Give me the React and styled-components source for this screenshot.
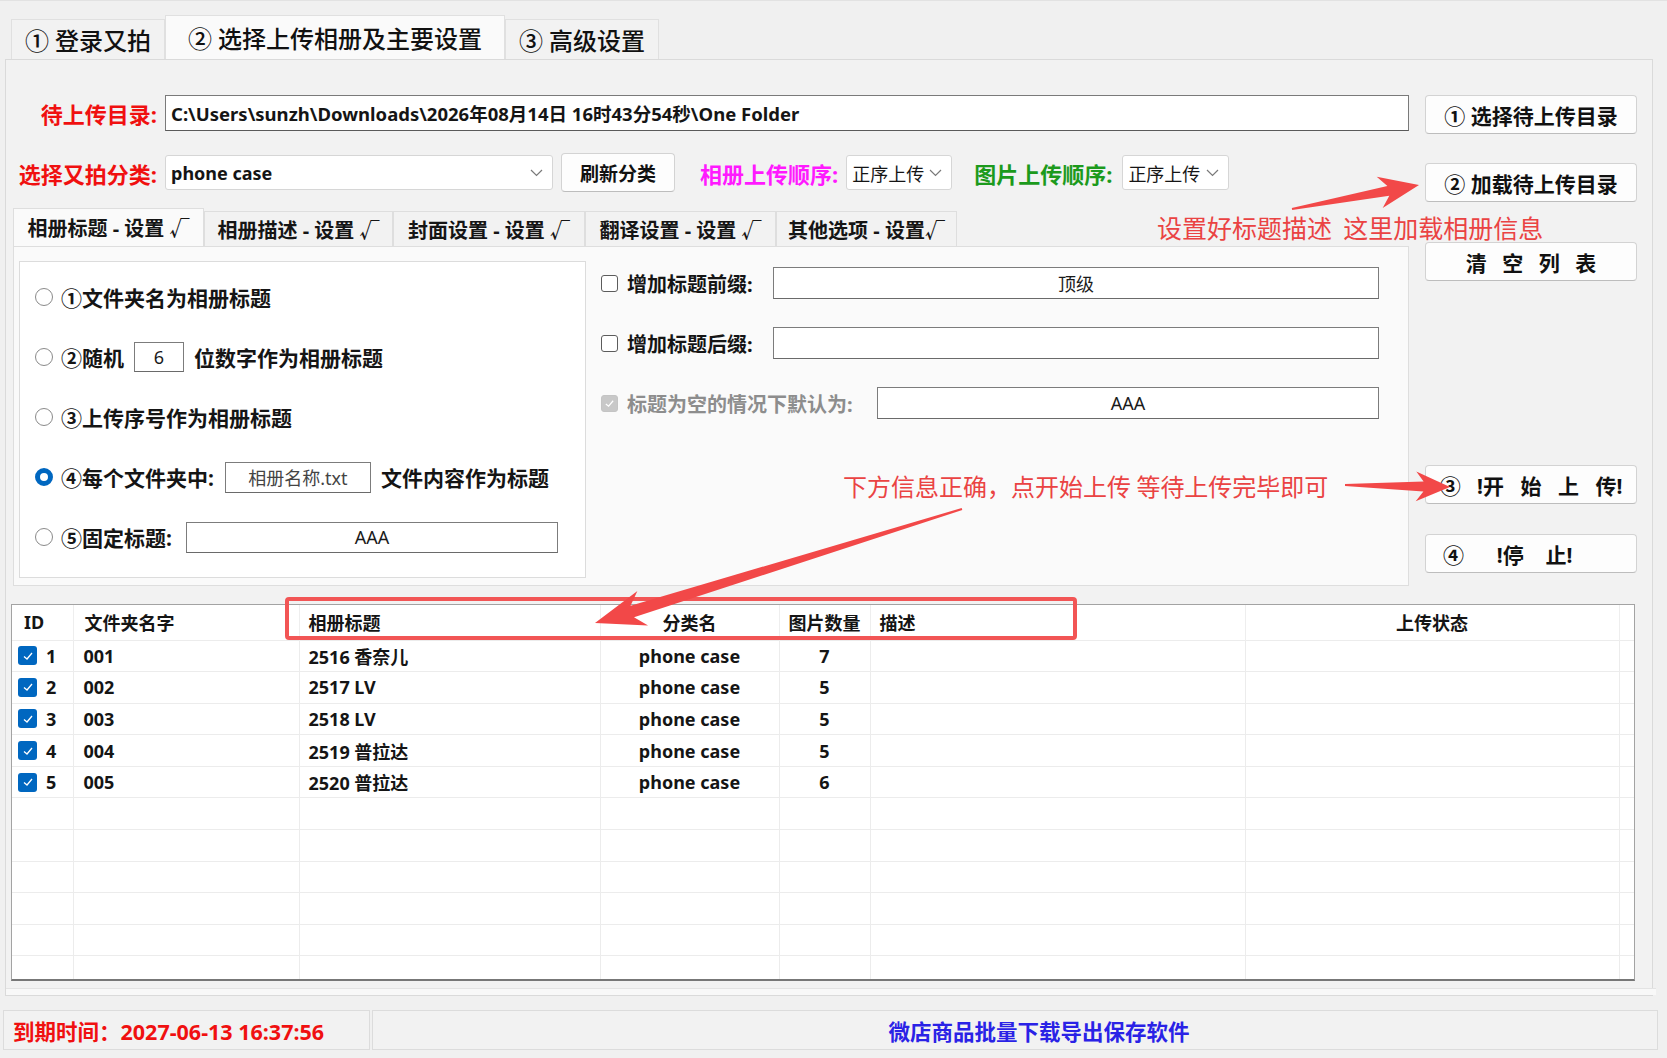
import styled, { createGlobalStyle } from "styled-components";

const GlobalStyle = createGlobalStyle`
  html, body {
    margin: 0;
    padding: 0;
    background: #f0f0f0;
  }
  body {
    font-family: "Noto Sans", "Noto Sans CJK SC", sans-serif;
    color: #151515;
  }
  * { box-sizing: border-box; }
`

const Window = styled.div`
    position: relative;
    width: 1667px;
    height: 1058px;
    overflow: hidden;
    background: #f0f0f0;
    padding-top: 14px;
    border-top: 1px solid #e2e2e2;
`

const TopTabs = styled.div`
    display: flex;
    align-items: flex-end;
    height: 44px;
    padding-left: 11px;
`

const TopTab = styled.div`
    width: ${p => p.$w}px;
    height: ${p => p.$active ? 44 : 40}px;
    display: flex;
    align-items: center;
    justify-content: center;
    font-size: 24px;
    font-weight: 500;
    background: ${p => p.$active ? '#fafafa' : '#f2f2f2'};
    border: 1px solid #e0e0e0;
    border-bottom: none;
    color: #111;
`

const MainPage = styled.div`
    margin: 0 14px 0 5px;
    height: 937px;
    background: #f2f2f2;
    border: 1px solid #dadada;
    padding: 35px 15px 0 7px;
`

const TopSection = styled.div`
    display: flex;
`

const LeftCol = styled.div`
    width: 1396px;
`

const RightCol = styled.div`
    width: 212px;
    margin-left: 16px;
    display: flex;
    flex-direction: column;
`

const FormRow = styled.div`
    display: flex;
    align-items: center;
    height: ${p => p.$h}px;
    margin-top: ${p => p.$mt || 0}px;
`

const Label = styled.div`
    width: ${p => p.$w ? `${p.$w}px` : 'auto'};
    margin-left: ${p => p.$ml || 0}px;
    text-align: right;
    padding-right: ${p => p.$pr || 0}px;
    font-size: 22px;
    font-weight: 700;
    color: ${p => p.$color};
    white-space: nowrap;
`

const PathInput = styled.div`
    flex: 1;
    height: 36px;
    background: #fff;
    border: 1px solid #7a7a7a;
    border-bottom-color: #5a5a5a;
    display: flex;
    align-items: center;
    padding-left: 5px;
    font-size: 18.5px;
    font-weight: 700;
    white-space: nowrap;
`

const Select = styled.div`
    width: ${p => p.$w}px;
    height: 35px;
    margin-left: ${p => p.$ml || 0}px;
    background: #fff;
    border: 1px solid #d6d6d6;
    border-radius: 3px;
    display: flex;
    align-items: center;
    justify-content: space-between;
    padding: 0 9px 0 5px;
    font-size: 18px;
    font-weight: ${p => p.$bold ? 700 : 400};
    white-space: nowrap;
`

const Button = styled.div`
    width: ${p => p.$w}px;
    height: 39px;
    margin-left: ${p => p.$ml || 0}px;
    margin-top: ${p => p.$mt || 0}px;
    background: #fdfdfd;
    border: 1px solid #d3d3d3;
    border-bottom-color: #bdbdbd;
    border-radius: 4px;
    display: flex;
    align-items: center;
    justify-content: ${p => p.$left ? 'flex-start' : 'center'};
    padding-left: ${p => p.$left ? 17 : 0}px;
    font-size: ${p => p.$fs || 21}px;
    font-weight: 700;
    white-space: pre;
    word-spacing: ${p => p.$ws || 0}px;
    color: #111;
`

const SubTabs = styled.div`
    display: flex;
    align-items: flex-end;
    height: 38px;
    margin-top: 16px;
`

const SubTab = styled.div`
    width: ${p => p.$w}px;
    height: ${p => p.$active ? 38 : 35}px;
    display: flex;
    align-items: center;
    justify-content: center;
    font-size: 20px;
    font-weight: 700;
    background: ${p => p.$active ? '#fafafa' : '#f2f2f2'};
    border: 1px solid #dedede;
    border-bottom: none;
    white-space: pre;
`

const SubPage = styled.div`
    height: 340px;
    background: #fafafa;
    border: 1px solid #dedede;
    padding: 14px 0 0 5px;
    display: flex;
`

const GroupBox = styled.div`
    width: 567px;
    height: 317px;
    background: #fff;
    border: 1px solid #dcdcdc;
    padding: 5px 0 0 15px;
`

const RadioRow = styled.div`
    display: flex;
    align-items: center;
    height: 60px;
    gap: ${p => p.$gap || 8}px;
    font-size: 21px;
    font-weight: 700;
    white-space: nowrap;
`

const Radio = styled.span`
    width: 18px;
    height: 18px;
    border-radius: 50%;
    flex: none;
    background: #fff;
    border: ${p => p.$on ? '5px solid #0067c0' : '1px solid #8a8a8a'};
`

const TextBox = styled.div`
    width: ${p => p.$w}px;
    height: ${p => p.$h || 31}px;
    margin-left: ${p => p.$ml || 0}px;
    margin-right: ${p => p.$mr || 0}px;
    background: #fff;
    border: 1px solid #7c7c7c;
    border-bottom-color: #6a6a6a;
    display: flex;
    align-items: center;
    justify-content: center;
    font-size: 18px;
    font-weight: 400;
    color: ${p => p.$muted ? '#444' : '#1a1a1a'};
    flex: none;
`

const Options = styled.div`
    margin-left: 15px;
    padding-top: 6px;
    display: flex;
    flex-direction: column;
    gap: 28px;
`

const OptRow = styled.div`
    display: flex;
    align-items: center;
    height: 32px;
`

const CheckBox = styled.span`
    width: 17px;
    height: 17px;
    flex: none;
    border-radius: 3px;
    border: 1px solid ${p => p.$disabled ? '#c4c4c4' : '#5c5c5c'};
    background: ${p => p.$disabled ? '#c8c8c8' : '#fff'};
    display: flex;
    align-items: center;
    justify-content: center;
`

const OptLabel = styled.div`
    width: ${p => p.$w}px;
    margin-left: 9px;
    font-size: 20px;
    font-weight: 700;
    color: ${p => p.$muted ? '#8d8d8d' : '#151515'};
    white-space: nowrap;
`

const TableWrap = styled.div`
    width: 1624px;
    height: 377px;
    margin: 18px 0 0 -2px;
    background: #fff;
    border: 1px solid #a3a3a3;
    border-bottom: 2px solid #777;
    overflow: hidden;
`

const Table = styled.table`
    table-layout: fixed;
    border-collapse: collapse;
    width: 1622px;
`

const Th = styled.th`
    height: 35px;
    padding: 0 0 0 ${p => p.$pl || 0}px;
    text-align: ${p => p.$align || 'left'};
    font-size: 18px;
    font-weight: 700;
    border-right: 1px solid #eeeeee;
    white-space: nowrap;
`

const Td = styled.td`
    height: 31.6px;
    padding: 0 0 0 ${p => p.$pl || 0}px;
    text-align: ${p => p.$align || 'left'};
    font-size: 18px;
    font-weight: 700;
    border-right: 1px solid #ececec;
    border-top: 1px solid #ececec;
    white-space: nowrap;
`

const IdCell = styled.div`
    display: flex;
    align-items: center;
    gap: 9px;
`

const RowCheck = styled.span`
    width: 19px;
    height: 19px;
    border-radius: 3px;
    background: #0067c0;
    display: flex;
    align-items: center;
    justify-content: center;
`

const BottomStrip = styled.div`
    height: 7px;
    margin: 7px 0 0 -7px;
    width: 1650px;
    background: #f8f8f8;
    border-top: 1px solid #e3e3e3;
`

const StatusBar = styled.div`
    display: flex;
    height: 40px;
    margin: 14px 9px 0 3px;
`

const StatusCell = styled.div`
    width: ${p => p.$w ? `${p.$w}px` : 'auto'};
    flex: ${p => p.$w ? 'none' : 1};
    margin-left: ${p => p.$ml || 0}px;
    border: 1px solid #dcdcdc;
    background: #f2f2f2;
    display: flex;
    align-items: center;
    justify-content: ${p => p.$center ? 'center' : 'flex-start'};
    padding-left: ${p => p.$pl || 0}px;
    font-size: 21.5px;
    font-weight: 700;
    color: ${p => p.$color};
    white-space: nowrap;
`

const Note = styled.div`
    position: absolute;
    left: ${p => p.$x}px;
    top: ${p => p.$y}px;
    font-size: ${p => p.$fs}px;
    line-height: 34px;
    color: #ea4343;
    white-space: pre;
    font-family: "Noto Sans CJK SC", sans-serif;
`

const Highlight = styled.div`
    position: absolute;
    left: 285px;
    top: 596px;
    width: 792px;
    height: 43px;
    border: 4px solid #f25555;
    border-radius: 4px;
`

const Overlay = styled.svg`
    position: absolute;
    left: 0;
    top: 0;
    pointer-events: none;
`

function Chevron() {
    return (
        <svg width="13" height="8" viewBox="0 0 13 8">
            <polyline points="1,1 6.5,6.5 12,1" fill="none" stroke="#7a7a7a" strokeWidth="1.2" />
        </svg>
    )
}

function Tick({ color = '#fff', size = 12 }) {
    return (
        <svg width={size} height={size} viewBox="0 0 12 12">
            <polyline points="2,6.5 5,9 10,3" fill="none" stroke={color} strokeWidth="1.3" />
        </svg>
    )
}

function arrow(x1, y1, x2, y2, headLen, headW, tailW, neckW) {
    const len = Math.hypot(x2 - x1, y2 - y1)
    const ux = (x2 - x1) / len
    const uy = (y2 - y1) / len
    const nx = -uy
    const ny = ux
    const pt = (x, y) => `${x.toFixed(1)},${y.toFixed(1)}`
    const bx = x2 - ux * headLen
    const by = y2 - uy * headLen
    const kx = x2 - ux * headLen * 0.78
    const ky = y2 - uy * headLen * 0.78
    return [
        pt(x1 + nx * tailW / 2, y1 + ny * tailW / 2),
        pt(kx + nx * neckW / 2, ky + ny * neckW / 2),
        pt(bx + nx * headW / 2, by + ny * headW / 2),
        pt(x2, y2),
        pt(bx - nx * headW / 2, by - ny * headW / 2),
        pt(kx - nx * neckW / 2, ky - ny * neckW / 2),
        pt(x1 - nx * tailW / 2, y1 - ny * tailW / 2),
    ].join(' ')
}

const topTabs = [
    { label: '① 登录又拍', w: 154 },
    { label: '② 选择上传相册及主要设置', w: 340, active: true },
    { label: '③ 高级设置', w: 154 },
]

const subTabs = [
    { label: '相册标题 - 设置 √', w: 191, active: true },
    { label: '相册描述 - 设置 √', w: 189 },
    { label: '封面设置 - 设置 √', w: 192 },
    { label: '翻译设置 - 设置 √', w: 191 },
    { label: '其他选项 - 设置√', w: 181 },
]

const columns = [
    { label: 'ID', w: 61, pl: 12 },
    { label: '文件夹名字', w: 226, pl: 11 },
    { label: '相册标题', w: 301, pl: 9 },
    { label: '分类名', w: 179, align: 'center' },
    { label: '图片数量', w: 91, align: 'center' },
    { label: '描述', w: 375, pl: 9 },
    { label: '上传状态', w: 374, align: 'center' },
    { label: '', w: 17 },
]

const albums = [
    { id: 1, folder: '001', title: '2516 香奈儿', cat: 'phone case', count: 7 },
    { id: 2, folder: '002', title: '2517 LV', cat: 'phone case', count: 5 },
    { id: 3, folder: '003', title: '2518 LV', cat: 'phone case', count: 5 },
    { id: 4, folder: '004', title: '2519 普拉达', cat: 'phone case', count: 5 },
    { id: 5, folder: '005', title: '2520 普拉达', cat: 'phone case', count: 6 },
]

export default function App() {
    const emptyRows = Array.from({ length: 6 })

    return (
        <Window>
            <GlobalStyle />
            <TopTabs>
                {topTabs.map(t => (
                    <TopTab key={t.label} $w={t.w} $active={t.active}>{t.label}</TopTab>
                ))}
            </TopTabs>

            <MainPage>
                <TopSection>
                    <LeftCol>
                        <FormRow $h={36}>
                            <Label $w={152} $pr={8} $color="#f01010">待上传目录:</Label>
                            <PathInput>C:\Users\sunzh\Downloads\2026年08月14日 16时43分54秒\One Folder</PathInput>
                        </FormRow>

                        <FormRow $h={39} $mt={22}>
                            <Label $w={152} $pr={8} $color="#f01010">选择又拍分类:</Label>
                            <Select $w={388} $bold>phone case<Chevron /></Select>
                            <Button $w={114} $ml={8} $fs={19}>刷新分类</Button>
                            <Label $ml={25} $color="#ff19ff">相册上传顺序:</Label>
                            <Select $w={106} $ml={8}>正序上传<Chevron /></Select>
                            <Label $ml={22} $color="#1c9a1c">图片上传顺序:</Label>
                            <Select $w={107} $ml={10}>正序上传<Chevron /></Select>
                        </FormRow>

                        <SubTabs>
                            {subTabs.map(t => (
                                <SubTab key={t.label} $w={t.w} $active={t.active}>{t.label}</SubTab>
                            ))}
                        </SubTabs>

                        <SubPage>
                            <GroupBox>
                                <RadioRow><Radio />①文件夹名为相册标题</RadioRow>
                                <RadioRow $gap={8}>
                                    <Radio />②随机
                                    <TextBox $w={50} $h={30} $ml={2} $mr={2}>6</TextBox>
                                    位数字作为相册标题
                                </RadioRow>
                                <RadioRow><Radio />③上传序号作为相册标题</RadioRow>
                                <RadioRow>
                                    <Radio $on />④每个文件夹中:
                                    <TextBox $w={146} $ml={3} $mr={2} $muted>相册名称.txt</TextBox>
                                    文件内容作为标题
                                </RadioRow>
                                <RadioRow>
                                    <Radio />⑤固定标题:
                                    <TextBox $w={372} $ml={6}>AAA</TextBox>
                                </RadioRow>
                            </GroupBox>

                            <Options>
                                <OptRow>
                                    <CheckBox />
                                    <OptLabel $w={146}>增加标题前缀:</OptLabel>
                                    <TextBox $w={606} $h={32}>顶级</TextBox>
                                </OptRow>
                                <OptRow>
                                    <CheckBox />
                                    <OptLabel $w={146}>增加标题后缀:</OptLabel>
                                    <TextBox $w={606} $h={32}></TextBox>
                                </OptRow>
                                <OptRow>
                                    <CheckBox $disabled><Tick size={11} /></CheckBox>
                                    <OptLabel $w={250} $muted>标题为空的情况下默认为:</OptLabel>
                                    <TextBox $w={502} $h={32}>AAA</TextBox>
                                </OptRow>
                            </Options>
                        </SubPage>
                    </LeftCol>

                    <RightCol>
                        <Button $w={212}>① 选择待上传目录</Button>
                        <Button $w={212} $mt={29}>② 加载待上传目录</Button>
                        <Button $w={212} $mt={40} $ws={10}>清 空 列 表</Button>
                        <Button $w={212} $mt={184} $ws={11}>③ !开 始 上 传!</Button>
                        <Button $w={212} $mt={30} $left>{'④      !停    止!'}</Button>
                    </RightCol>
                </TopSection>

                <TableWrap>
                    <Table>
                        <colgroup>
                            {columns.map((c, i) => <col key={i} style={{ width: c.w }} />)}
                        </colgroup>
                        <thead>
                            <tr>
                                {columns.map((c, i) => (
                                    <Th key={i} $pl={c.pl} $align={c.align}>{c.label}</Th>
                                ))}
                            </tr>
                        </thead>
                        <tbody>
                            {albums.map(a => (
                                <tr key={a.id}>
                                    <Td $pl={6}>
                                        <IdCell><RowCheck><Tick size={12} /></RowCheck>{a.id}</IdCell>
                                    </Td>
                                    <Td $pl={10}>{a.folder}</Td>
                                    <Td $pl={9}>{a.title}</Td>
                                    <Td $align="center">{a.cat}</Td>
                                    <Td $align="center">{a.count}</Td>
                                    <Td />
                                    <Td />
                                    <Td />
                                </tr>
                            ))}
                            {emptyRows.map((_, r) => (
                                <tr key={`e${r}`}>
                                    {columns.map((c, i) => <Td key={i} />)}
                                </tr>
                            ))}
                        </tbody>
                    </Table>
                </TableWrap>

                <BottomStrip />
            </MainPage>

            <StatusBar>
                <StatusCell $w={367} $pl={9} $color="#f01010">到期时间：2027-06-13 16:37:56</StatusCell>
                <StatusCell $ml={2} $center $pl={48} $color="#2a22e6">微店商品批量下载导出保存软件</StatusCell>
            </StatusBar>

            <Note $x={1157} $y={209} $fs={25}>设置好标题描述  这里加载相册信息</Note>
            <Note $x={843} $y={468} $fs={24}>下方信息正确，点开始上传 等待上传完毕即可</Note>
            <Highlight />

            <Overlay width="1667" height="1058" viewBox="0 0 1667 1058">
                <polygon points={arrow(1292, 208, 1419, 184, 40, 32, 2, 10)} fill="#f24848" />
                <polygon points={arrow(1345, 484, 1450, 486, 34, 30, 2, 10)} fill="#f24848" />
                <polygon points={arrow(962, 508, 595, 622, 50, 36, 2, 12)} fill="#f24848" />
            </Overlay>
        </Window>
    );
}
